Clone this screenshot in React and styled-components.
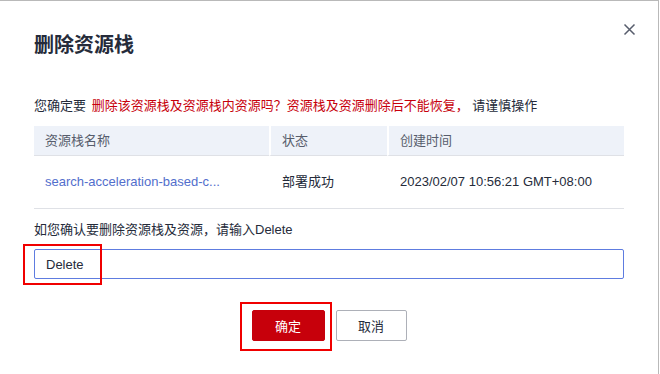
import styled, { createGlobalStyle } from "styled-components";

const GlobalStyle = createGlobalStyle`
  html, body {
    margin: 0;
    padding: 0;
    background: #ffffff;
  }
  body {
    font-family: "Liberation Sans", "Noto Sans CJK SC", sans-serif;
    color: #252b3a;
  }
  * { box-sizing: border-box; }
`;

const Dialog = styled.div`
  position: relative;
  width: 659px;
  height: 374px;
  background: #ffffff;
  border-top: 1px solid #b9b9b9;
  border-right: 1px solid #b9b9b9;
  padding: 31px 34px 0 34px;
`;

const Title = styled.h1`
  margin: 0;
  font-size: 20px;
  line-height: 26px;
  font-weight: 700;
  color: #252b3a;
`;

const CloseButton = styled.button`
  position: absolute;
  top: 22px;
  right: 22px;
  width: 13px;
  height: 13px;
  padding: 0;
  border: none;
  background: none;
  display: flex;
  cursor: pointer;
`;

const Warning = styled.p`
  margin: 38px 0 0;
  font-size: 13px;
  line-height: 20px;
  color: #252b3a;

  em {
    font-style: normal;
    color: #c7000b;
    margin-left: 2px;
  }
`;

const Table = styled.div`
  margin-top: 10px;
  display: grid;
  grid-template-columns: 235px 118px 1fr;
  font-size: 13px;
`;

const HeadCell = styled.div`
  height: 30px;
  line-height: 29px;
  background: #eef2f9;
  color: #575d6c;
  padding-left: 11px;
  border-left: ${(p) => (p.$first ? "none" : "2px solid #ffffff")};
  border-bottom: 1px solid #dfe1e6;
`;

const Cell = styled.div`
  height: 53px;
  line-height: 52px;
  padding-left: ${(p) => (p.$first ? "11px" : "13px")};
  border-bottom: 1px solid #dfe1e6;
  color: ${(p) => (p.$link ? "#526ecc" : "#252b3a")};
  white-space: nowrap;
`;

const Label = styled.p`
  margin: 11px 0 0;
  font-size: 13px;
  line-height: 20px;
  color: #252b3a;
`;

const InputWrap = styled.div`
  position: relative;
  margin-top: 9px;
`;

const Input = styled.input`
  display: block;
  width: 590px;
  height: 30px;
  border: 1px solid #5e7ce0;
  border-radius: 2px;
  padding: 0 11px;
  font-family: "Liberation Sans", "Noto Sans CJK SC", sans-serif;
  font-size: 13px;
  color: #252b3a;
  outline: none;
`;

const Highlight = styled.div`
  position: absolute;
  left: ${(p) => p.$left}px;
  top: ${(p) => p.$top}px;
  width: ${(p) => p.$w}px;
  height: ${(p) => p.$h}px;
  border: 2px solid #f00000;
  pointer-events: none;
`;

const Footer = styled.div`
  margin-top: 31px;
  display: flex;
  justify-content: center;
  gap: 11px;
`;

const BtnWrap = styled.div`
  position: relative;
`;

const Button = styled.button`
  width: ${(p) => (p.$primary ? "73px" : "71px")};
  height: 31px;
  border-radius: 2px;
  border: 1px solid ${(p) => (p.$primary ? "#c7000b" : "#adb0b8")};
  background: ${(p) => (p.$primary ? "#c7000b" : "#ffffff")};
  color: ${(p) => (p.$primary ? "#ffffff" : "#252b3a")};
  font-family: "Liberation Sans", "Noto Sans CJK SC", sans-serif;
  font-size: 13px;
  cursor: pointer;
  padding: 0;
`;

export default function App() {
  return (
    <>
      <GlobalStyle />
      <Dialog>
        <Title>删除资源栈</Title>
        <CloseButton aria-label="close">
          <svg width="13" height="13" viewBox="0 0 13 13">
            <path d="M1.5 1.5 L11.5 11.5 M11.5 1.5 L1.5 11.5" stroke="#575d6c" strokeWidth="1.5" fill="none" />
          </svg>
        </CloseButton>
        <Warning>
          您确定要 <em>删除该资源栈及资源栈内资源吗？资源栈及资源删除后不能恢复，</em>  请谨慎操作
        </Warning>
        <Table>
          <HeadCell $first>资源栈名称</HeadCell>
          <HeadCell>状态</HeadCell>
          <HeadCell>创建时间</HeadCell>
          <Cell $first $link>search-acceleration-based-c...</Cell>
          <Cell>部署成功</Cell>
          <Cell>2023/02/07 10:56:21 GMT+08:00</Cell>
        </Table>
        <Label>如您确认要删除资源栈及资源，请输入Delete</Label>
        <InputWrap>
          <Input defaultValue="Delete" />
          <Highlight $left={-11} $top={-5} $w={79} $h={41} />
        </InputWrap>
        <Footer>
          <BtnWrap>
            <Button $primary>确定</Button>
            <Highlight $left={-12} $top={-8} $w={92} $h={49} />
          </BtnWrap>
          <Button>取消</Button>
        </Footer>
      </Dialog>
    </>
  );
}
